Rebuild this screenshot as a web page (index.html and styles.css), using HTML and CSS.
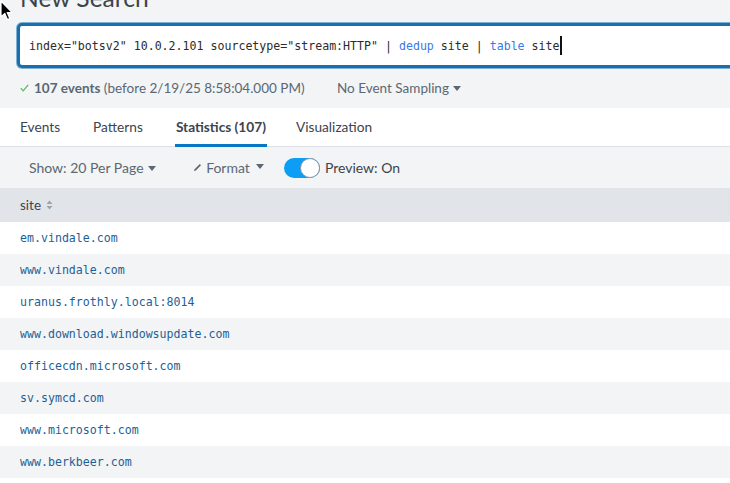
FILE: index.html
```html
<!DOCTYPE html>
<html>
<head>
<meta charset="utf-8">
<link rel="stylesheet" href="styles.css">
</head>
<body>
<div class="page">
  <h1 class="title">New Search</h1>
  <div class="search-wrap">
    <div class="search-box">
      <span class="query">index="botsv2" 10.0.2.101 sourcetype="stream:HTTP" | <span class="kw">dedup</span> site | <span class="kw">table</span> site</span><span class="caret"></span>
    </div>
  </div>
  <div class="status">
    <span class="status-left"><svg class="check" width="9" height="8" viewBox="0 0 9 8"><path d="M0.8 4.2 L3.2 6.8 L8.2 0.8" fill="none" stroke="#5cb85c" stroke-width="1.2"/></svg><b>107 events</b> (before 2/19/25 8:58:04.000 PM)</span>
    <span class="sampling">No Event Sampling <span class="tri"></span></span>
  </div>
  <div class="tabs">
    <span class="tab">Events</span>
    <span class="tab">Patterns</span>
    <span class="tab active">Statistics (107)</span>
    <span class="tab">Visualization</span>
  </div>
  <div class="toolbar">
    <span class="tool show">Show: 20 Per Page <span class="tri"></span></span>
    <span class="tool format"><svg class="pencil" width="9" height="9" viewBox="0 0 9 9"><path d="M1 8 L1.6 6.2 L6.8 1 L8 2.2 L2.8 7.4 Z" fill="#5c6773"/></svg>Format <span class="tri tri-gap"></span></span>
    <span class="toggle"><span class="knob"></span></span>
    <span class="tool preview">Preview: On</span>
  </div>
  <div class="table">
    <div class="thead"><span>site</span><svg class="sort" width="7" height="10" viewBox="0 0 7 10"><path d="M3.5 0.5 L6.5 4 L0.5 4 Z M3.5 9.5 L6.5 6 L0.5 6 Z" fill="#9aa4ae"/></svg></div>
    <div class="row">em.vindale.com</div>
    <div class="row alt">www.vindale.com</div>
    <div class="row">uranus.frothly.local:8014</div>
    <div class="row alt">www.download.windowsupdate.com</div>
    <div class="row">officecdn.microsoft.com</div>
    <div class="row alt">sv.symcd.com</div>
    <div class="row">www.microsoft.com</div>
    <div class="row alt">www.berkbeer.com</div>
  </div>
</div>
<svg class="cursor" width="14" height="22" viewBox="0 0 14 22"><path d="M1 1 L1 17 L4.8 13.4 L7.4 19.6 L9.8 18.6 L7.2 12.6 L12.2 12.6 Z" fill="#000" stroke="#fff" stroke-width="1.2" stroke-linejoin="round"/></svg>
</body>
</html>
```
FILE: styles.css
```css
html, body {
  margin: 0;
  padding: 0;
  background: #ffffff;
  overflow: hidden;
}
body {
  width: 730px;
  height: 483px;
  position: relative;
  font-family: Lato, "Open Sans", sans-serif;
}
.page {
  background: #f2f4f5;
}
.title {
  margin: -17px 0 0 20px;
  font-size: 24.6px;
  font-weight: 400;
  line-height: 30px;
  color: #3c444d;
  height: 10px;
  overflow: visible;
}
.search-wrap {
  padding: 30px 0 0 17px;
}
.search-box {
  display: flex;
  align-items: center;
  height: 39px;
  margin-right: -20px;
  background: #fff;
  border: 3px solid #1b6eab;
  border-radius: 5px;
  box-shadow: 0 0 0 1px #7fb1d6;
  padding-left: 9px;
  font-family: "DejaVu Sans Mono", monospace;
  font-size: 11.6px;
  color: #2b2b2b;
  white-space: pre;
}
.kw {
  color: #3a78e8;
}
.caret {
  display: inline-block;
  width: 2px;
  height: 19px;
  background: #111;
}
.status {
  display: flex;
  align-items: center;
  height: 40px;
  font-size: 13.5px;
  color: #5c6773;
}
.status-left {
  display: flex;
  align-items: center;
  white-space: pre;
  padding-left: 20px;
  width: 317px;
}
.status-left b {
  color: #5c6773;
  font-weight: 700;
}
.check {
  margin-right: 5px;
}
.tri {
  display: inline-block;
  width: 0;
  height: 0;
  border-left: 4px solid transparent;
  border-right: 4px solid transparent;
  border-top: 5px solid #5c6773;
  vertical-align: middle;
  margin-left: 1px;
  margin-top: -2px;
}
.tri-gap {
  margin-left: 6px;
}
.tabs {
  display: flex;
  background: #fff;
  height: 38px;
  border-bottom: 1px solid #dde1e5;
  padding-left: 20px;
}
.tab {
  font-size: 13.7px;
  color: #3c444d;
  line-height: 38px;
  margin-right: 33px;
  position: relative;
}
.tab.active {
  font-weight: 700;
  margin-right: 30px;
}
.tab.active::after {
  content: "";
  position: absolute;
  left: -1px;
  right: -1px;
  bottom: -1px;
  height: 3px;
  background: #0877c4;
}
.toolbar {
  display: flex;
  align-items: center;
  height: 41px;
  padding-left: 29px;
  font-size: 14px;
  color: #5c6773;
}
.show {
  margin-right: 37px;
}
.format {
  display: flex;
  align-items: center;
  margin-right: 20px;
}
.pencil {
  margin-right: 4px;
}
.toggle {
  width: 36px;
  height: 20px;
  border-radius: 10px;
  background: #0c9df5;
  position: relative;
  margin-right: 5px;
}
.knob {
  position: absolute;
  right: 0;
  top: 0;
  width: 18px;
  height: 18px;
  border-radius: 50%;
  background: #fff;
  border: 1px solid #8a97a3;
}
.preview {
  color: #3c444d;
}
.thead {
  display: flex;
  align-items: center;
  height: 34px;
  background: #e1e5ea;
  padding-left: 20px;
  font-size: 13.5px;
  color: #3c444d;
}
.sort {
  margin-left: 5px;
}
.row {
  height: 32px;
  line-height: 32px;
  background: #fff;
  padding-left: 20px;
  font-family: "DejaVu Sans Mono", monospace;
  font-size: 11.6px;
  color: #1d5f96;
}
.row.alt {
  background: #f2f4f5;
}
.cursor {
  position: absolute;
  left: 0;
  top: 0;
}
```
